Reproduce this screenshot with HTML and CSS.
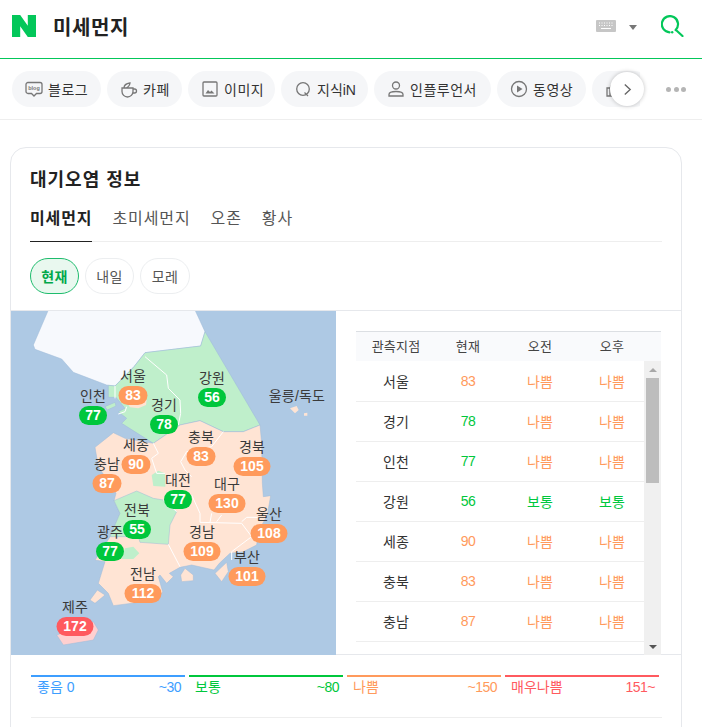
FILE: index.html
```html
<!DOCTYPE html>
<html lang="ko">
<head>
<meta charset="utf-8">
<title>미세먼지</title>
<link rel="stylesheet" href="styles.css">
</head>
<body>
<header class="top">
  <svg class="logo" viewBox="0 0 24 22"><path d="M0 0h8.200l7.600 10.800V0H24v22h-8.200L8.200 11.200V22H0z"/></svg>
  <h1 class="query">미세먼지</h1>
  <svg class="kbd" viewBox="0 0 20 12"><rect width="20" height="12" rx="1"/><path d="M3 3h1M5.500 3h1M8 3h1M10.500 3h1M13 3h1M15.500 3h1M3 5.500h1M5.500 5.500h1M8 5.500h1M10.500 5.500h1M13 5.500h1M15.500 5.500h1M5 8.500h10"/></svg>
  <span class="caret"></span>
  <svg class="search" viewBox="0 0 23 22"><path d="M8.600 17.300A8.100 8.100 0 1 1 14.600 15"/><path d="M15.500 15.500l6 5.500"/><circle cx="11.200" cy="17.300" r="1.200"/></svg>
</header>

<nav class="rail">
  <div class="chips">
    <a class="chip"><svg viewBox="0 0 20 20"><path d="M4 3.500h12a2 2 0 0 1 2 2v7a2 2 0 0 1-2 2h-3.500L10 17l-2.500-2.500H4a2 2 0 0 1-2-2v-7a2 2 0 0 1 2-2z"/><text class="tiny" x="10" y="11" text-anchor="middle">blog</text></svg>블로그</a>
    <a class="chip"><svg viewBox="0 0 20 20"><path d="M3 9h11v3.500a5.500 5.500 0 0 1-11 0zM14 10h1.500a2 2 0 0 1 0 4H13.500M5 9c0-3 2-4.500 6-5-.3 2.500-1.500 4-4 5"/></svg>카페</a>
    <a class="chip narrow"><svg viewBox="0 0 20 20"><rect x="3" y="3" width="14" height="14" rx="1"/><path class="fill" d="M5.500 14.500l2.500-3.500 2 2 1.500-1.500 3 3z"/></svg>이미지</a>
    <a class="chip tight"><svg viewBox="0 0 20 20"><circle cx="10" cy="10" r="6.300"/><path d="M11.500 13.500l3.500 3.500"/></svg>지식iN</a>
    <a class="chip wide"><svg viewBox="0 0 20 20"><circle cx="10" cy="6.500" r="3.500"/><path d="M3 17v-1.500c0-2 3-3 7-3s7 1 7 3V17z"/></svg>인플루언서</a>
    <a class="chip"><svg viewBox="0 0 20 20"><circle cx="10" cy="10" r="7.500"/><path class="fill" d="M8 6.500l5.500 3.500L8 13.500z"/></svg>동영상</a>
    <a class="chip icon-only"><svg viewBox="0 0 20 20"><path d="M3 9h3v8H3zM6 9l3-6c1.500 0 2 1 2 2.500V8h5l-1.500 9H6"/></svg></a>
  </div>
  <button class="next" type="button" aria-label="다음"><svg viewBox="0 0 10 14"><path d="M2 1.500L8 7l-6 5.500"/></svg></button>
  <div class="more"><i></i><i></i><i></i></div>
</nav>

<main class="card">
  <div class="card-head">
    <h2 class="card-title">대기오염 정보</h2>
    <div class="tabs">
      <a class="tab active">미세먼지</a>
      <a class="tab">초미세먼지</a>
      <a class="tab">오존</a>
      <a class="tab">황사</a>
    </div>
    <div class="pills">
      <a class="pill active">현재</a>
      <a class="pill">내일</a>
      <a class="pill">모레</a>
    </div>
  </div>

  <div class="body">
    <div class="map">
      <svg class="land" viewBox="3 3 975 1032" preserveAspectRatio="none">
        <path class="north" d="M115 0L555 0L585 65L572 108L405 128L372 170L315 228L290 225L190 187L155 147L75 118L70 105Z"/>
        <path class="green" d="M405 128L572 108L585 65L750 345L700 365L640 365L570 332L510 345L430 400L335 340L350 325L325 305L345 295L318 262L295 262L295 226L315 228L372 170Z"/>
        <path class="green" d="M285 290L315 277L318 288L292 300Z"/>
        <path class="peach" d="M430 400L510 345L570 332L640 365L700 365L750 345L755 400L757 520L760 560L782 557L772 615L745 665L740 705L700 725L660 730L628 760L612 780L545 765L510 772L478 790L490 800L470 820L450 795L445 800L458 845L440 870L310 887L295 850L265 820L285 755L255 750L270 730L300 680L330 610L312 572L318 550L265 470L255 412L310 368L345 385Z"/>
        <path class="green" d="M312 572L380 543L430 565L460 570L500 605L480 645L475 703L390 697L385 680L300 680L330 610Z"/>
        <path class="green flat" d="M345 715L370 710L388 730L370 747L335 747Z"/>
        <path class="green flat" d="M425 495L445 482L465 490L466 530L430 528Z"/>
        <path class="peach flat" d="M345 270L410 270L408 285L385 295L360 292Z"/>
        <path class="peach" d="M240 870L262 840L285 855L255 880ZM512 795L525 775L550 795L550 812L515 815ZM615 790L650 757L655 785L635 815Z"/>
        <path class="peach flat" d="M840 295L860 288L866 300L855 310ZM882 310L892 308L892 317L882 317Z"/>
        <path class="jeju" d="M140 975L250 935L265 960L250 990L160 1005Z"/>
        <path class="line" d="M405 140L470 195L475 235L510 270L512 310L505 345M315 228L315 265M350 290L345 305L325 312M430 400L445 430L425 445L440 490L465 490M640 365L605 410L530 425L512 455L525 480L545 500M545 555L570 610L570 637L695 640L725 680L665 725L665 750M600 637L605 610M620 635L635 615M695 635L710 622L745 622M475 703L510 770M460 570L500 605"/>
      </svg>

      <div class="pin p-seoul"><span class="name">서울</span><b class="val bad">83</b></div>
      <div class="pin p-incheon"><span class="name">인천</span><b class="val normal">77</b></div>
      <div class="pin p-gyeonggi"><span class="name">경기</span><b class="val normal">78</b></div>
      <div class="pin p-gangwon"><span class="name">강원</span><b class="val normal">56</b></div>
      <div class="pin p-ulleung"><span class="name">울릉/독도</span></div>
      <div class="pin p-chungbuk"><span class="name">충북</span><b class="val bad">83</b></div>
      <div class="pin p-gyeongbuk"><span class="name">경북</span><b class="val bad">105</b></div>
      <div class="pin p-chungnam"><span class="name">충남</span><b class="val bad">87</b></div>
      <div class="pin p-sejong"><span class="name">세종</span><b class="val bad">90</b></div>
      <div class="pin p-daejeon"><span class="name">대전</span><b class="val normal">77</b></div>
      <div class="pin p-daegu"><span class="name">대구</span><b class="val bad">130</b></div>
      <div class="pin p-gwangju"><span class="name">광주</span><b class="val normal">77</b></div>
      <div class="pin p-jeonbuk"><span class="name">전북</span><b class="val normal">55</b></div>
      <div class="pin p-gyeongnam"><span class="name">경남</span><b class="val bad">109</b></div>
      <div class="pin p-ulsan"><span class="name">울산</span><b class="val bad">108</b></div>
      <div class="pin p-busan"><span class="name">부산</span><b class="val bad">101</b></div>
      <div class="pin p-jeonnam"><span class="name">전남</span><b class="val bad">112</b></div>
      <div class="pin p-jeju"><span class="name">제주</span><b class="val worst">172</b></div>
    </div>

    <div class="stats">
      <div class="row head"><span>관측지점</span><span>현재</span><span>오전</span><span>오후</span></div>
      <div class="scroller">
        <div class="rows">
          <div class="row"><span>서울</span><span class="num c-bad">83</span><span class="c-bad">나쁨</span><span class="c-bad">나쁨</span></div>
          <div class="row"><span>경기</span><span class="num c-normal">78</span><span class="c-bad">나쁨</span><span class="c-bad">나쁨</span></div>
          <div class="row"><span>인천</span><span class="num c-normal">77</span><span class="c-bad">나쁨</span><span class="c-bad">나쁨</span></div>
          <div class="row"><span>강원</span><span class="num c-normal">56</span><span class="c-normal">보통</span><span class="c-normal">보통</span></div>
          <div class="row"><span>세종</span><span class="num c-bad">90</span><span class="c-bad">나쁨</span><span class="c-bad">나쁨</span></div>
          <div class="row"><span>충북</span><span class="num c-bad">83</span><span class="c-bad">나쁨</span><span class="c-bad">나쁨</span></div>
          <div class="row"><span>충남</span><span class="num c-bad">87</span><span class="c-bad">나쁨</span><span class="c-bad">나쁨</span></div>
        </div>
        <div class="bar">
          <span class="arrow up"></span>
          <span class="thumb"></span>
          <span class="arrow down"></span>
        </div>
      </div>
    </div>
  </div>

  <div class="legend-wrap">
    <div class="legend">
      <div class="level l-good"><span>좋음 0</span><span class="range">~30</span></div>
      <div class="level l-normal"><span>보통</span><span class="range">~80</span></div>
      <div class="level l-bad"><span>나쁨</span><span class="range">~150</span></div>
      <div class="level l-worst"><span>매우나쁨</span><span class="range">151~</span></div>
    </div>
    <div class="rule"></div>
  </div>
</main>
</body>
</html>
```
FILE: styles.css
```css
* { box-sizing: border-box; }
html, body { margin: 0; height: 727px; overflow: hidden; background: #fff; }
body { font-family: "Liberation Sans", "Noto Sans CJK KR", sans-serif; color: #222; }
h1, h2 { margin: 0; }

.top { height: 59px; border-bottom: 1px solid #03c75a; display: flex; align-items: center; padding: 0 18px 6px 12px; }
.logo { width: 24px; height: 22px; fill: #03c75a; }
.query { font-size: 20px; font-weight: 700; margin-left: 17px; letter-spacing: .6px; flex: 1; color: #222; }
.kbd { width: 20px; height: 12px; }
.kbd rect { fill: #c6c6c6; }
.kbd path { stroke: #fff; stroke-width: 1; fill: none; }
.caret { margin: 2px 0 0 13px; border: 4.5px solid transparent; border-top: 5px solid #777; border-bottom: 0; }
.search { width: 23px; height: 22px; margin-left: 24px; fill: none; stroke: #03c75a; stroke-width: 2.200; stroke-linecap: round; }
.search circle { fill: #03c75a; stroke: none; }

.rail { height: 61px; border-bottom: 1px solid #eee; display: flex; align-items: flex-start; padding: 12px 0 0 12px; position: relative; }
.chips { display: flex; gap: 6px; width: 628px; overflow: hidden; flex: none; }
.chip { height: 36px; border-radius: 18px; background: #f5f6f8; display: flex; align-items: center; justify-content: flex-start; padding: 0 0 0 12px; font-size: 14px; color: #333; white-space: nowrap; flex: none; width: 89px; letter-spacing: .5px; }
.chip:nth-child(2) { width: 75px; }
.chip.narrow { width: 87px; }
.chip.tight { width: 87px; letter-spacing: 0; }
.chip.wide { width: 117px; }
.chip.icon-only { width: 60px; }
.chip svg { width: 20px; height: 20px; margin-right: 4px; fill: none; stroke: #777; stroke-width: 1.300; }
.chip svg .tiny { fill: #777; stroke: none; font-size: 5.500px; font-weight: 700; letter-spacing: 0; }
.chip svg .fill { fill: #777; stroke: none; }
.next { position: absolute; left: 610px; top: 13px; width: 34px; height: 34px; border-radius: 50%; border: 0; background: #fff; box-shadow: 0 0 4px rgba(0,0,0,.25); padding: 0; display: flex; align-items: center; justify-content: center; }
.next svg { width: 9px; height: 13px; fill: none; stroke: #666; stroke-width: 1.500; }
.more { position: absolute; left: 666px; top: 28px; display: flex; gap: 2.500px; }
.more i { width: 5px; height: 5px; border-radius: 50%; background: #b5b5b5; }

.card { width: 672px; margin: 27px 0 0 10px; border: 1px solid #e6e8ec; border-radius: 16px 16px 0 0; height: 640px; }
.card-head { padding: 0 19px; border-bottom: 1px solid #e6e8ec; height: 163px; }
.card-title { font-size: 18px; font-weight: 700; line-height: 27px; color: #222; letter-spacing: 1px; height: 46px; padding-top: 19px; }
.tabs { margin-top: 10px; display: flex; gap: 20px; border-bottom: 1px solid #eee; height: 38px; padding-top: 3px; }
.tab { font-size: 16px; line-height: 24px; height: 35px; color: #555; letter-spacing: .9px; }
.tab.active { color: #222; font-weight: 700; border-bottom: 1px solid #222; }
.pills { margin-top: 16px; display: flex; gap: 6px; }
.pill { width: 49px; height: 36px; border-radius: 18px; border: 1px solid #eceef0; display: flex; align-items: center; justify-content: center; font-size: 14px; color: #555; letter-spacing: .3px; }
.pill:last-child { width: 50px; }
.pill.active { background: #e9f8ef; border-color: #1ebc6d; color: #02a84a; font-weight: 700; }

.body { display: flex; height: 344px; border-bottom: 1px solid #e6e8ec; }
.map { position: relative; width: 325px; height: 344px; background: #aec9e4; overflow: hidden; flex: none; }
.land { position: absolute; inset: 0; width: 100%; height: 100%; }
.north { fill: #f7f9fd; stroke: #9ebad9; stroke-width: 1.500; }
.green { fill: #bfefcb; stroke: #9ebad9; stroke-width: 1.500; }
.peach { fill: #ffe4d4; stroke: #9ebad9; stroke-width: 1.500; }
.flat { stroke: none; }
.jeju { fill: #ffd0d0; stroke: #9ebad9; stroke-width: 1.500; }
.line { fill: none; stroke: #fff; stroke-width: 3; }

.pin { position: absolute; transform: translateX(-50%); display: flex; flex-direction: column; align-items: center; white-space: nowrap; }
.name { height: 20px; line-height: 20px; font-size: 14px; color: #3a3a3a; letter-spacing: .2px; }
.val { height: 19px; line-height: 19px; border-radius: 9.500px; color: #fff; font-size: 14px; padding: 0 4px; text-align: center; display: block; }
.val.bad { background: #ff9a5c; min-width: 37px; }
.val.normal { background: #00c73c; min-width: 28px; }
.val.worst { background: #ff5a5f; min-width: 37px; }
.p-seoul .val, .p-chungbuk .val, .p-chungnam .val, .p-sejong .val { min-width: 29px; }
.p-seoul { left: 122px; top: 55px; }
.p-incheon { left: 82px; top: 75px; }
.p-gyeonggi { left: 153px; top: 84px; }
.p-gangwon { left: 201px; top: 57px; }
.p-ulleung { left: 286px; top: 75px; }
.p-chungbuk { left: 190px; top: 116px; }
.p-gyeongbuk { left: 241px; top: 126px; }
.p-chungnam { left: 96px; top: 143px; }
.p-sejong { left: 125px; top: 124px; }
.p-daejeon { left: 167px; top: 159px; }
.p-daegu { left: 216px; top: 163px; }
.p-gwangju { left: 99px; top: 211px; }
.p-jeonbuk { left: 126px; top: 189px; }
.p-gyeongnam { left: 191px; top: 211px; }
.p-ulsan { left: 258px; top: 193px; }
.p-busan { left: 236px; top: 236px; }
.p-jeonnam { left: 132px; top: 253px; }
.p-jeju { left: 64px; top: 286px; }

.stats { width: 305px; margin: 20px 0 0 20px; }
.row { display: grid; grid-template-columns: 80px 64px 80px 64px; height: 40px; border-bottom: 1px solid #eee; align-items: center; text-align: center; font-size: 14px; color: #333; padding-bottom: 1px; }
.row.head { height: 30px; background: #f9fafc; border-top: 1px solid #dcdfe3; border-bottom: 0; font-size: 13px; color: #444; padding-bottom: 2px; letter-spacing: .2px; }
.num { font-size: 14px; letter-spacing: -.5px; }
.c-bad { color: #ff9a5c; }
.c-normal { color: #00c73c; }
.scroller { display: flex; height: 294px; overflow: hidden; }
.rows { width: 288px; flex: none; padding-top: 1px; }
.bar { width: 17px; background: #f0f0f0; display: flex; flex-direction: column; align-items: center; position: relative; }
.thumb { width: 13px; height: 105px; background: #bdbdbd; }
.arrow { position: absolute; border: 4px solid transparent; }
.arrow.up { top: 7px; border-bottom: 4px solid #a8a8a8; border-top: 0; }
.arrow.down { bottom: 6px; border-top: 4px solid #555; border-bottom: 0; }
.up + .thumb { margin-top: 17px; }

.legend-wrap { padding: 20px 19px 0 20px; }
.legend { display: flex; gap: 4px; width: 628px; }
.level { flex: 1; border-top: 2px solid; display: flex; justify-content: space-between; padding: 1px 4px 0 6px; font-size: 14px; line-height: 19px; }
.range { letter-spacing: -.5px; }
.l-good { color: #3d9eff; }
.l-normal { color: #00c73c; }
.l-bad { color: #ff9a5c; }
.l-worst { color: #ff5a5f; }
.rule { margin-top: 20px; height: 1px; background: #eee; }
```
